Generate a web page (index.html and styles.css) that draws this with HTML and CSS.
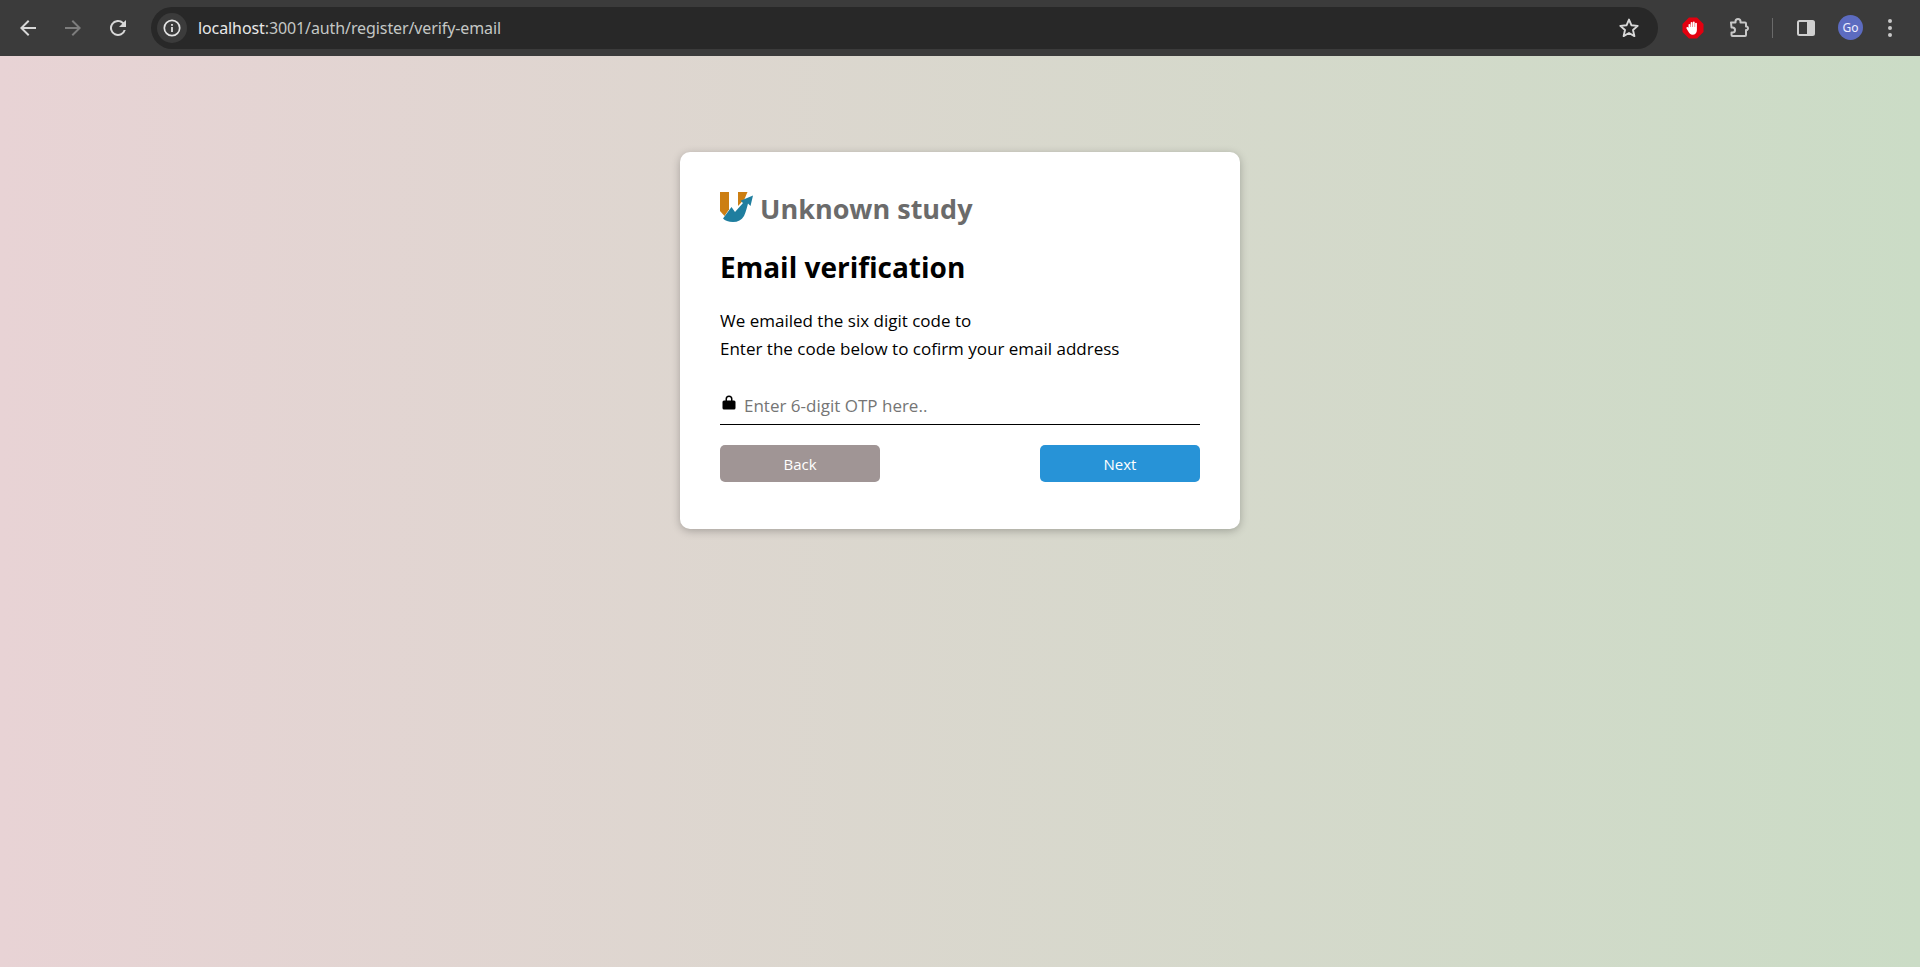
FILE: index.html
```html
<!DOCTYPE html>
<html lang="en">
<head>
    <meta charset="UTF-8">
    <meta name="viewport" content="width=device-width, initial-scale=1.0">
    <title>Email verification</title>
    <link rel="stylesheet" href="styles.css">
</head>
<body>

    <header class="toolbar">
        <div class="nav-icons">
            <svg class="icon" viewBox="0 0 24 24"><path d="M20 11H7.8l5.6-5.6L12 4l-8 8 8 8 1.4-1.4L7.8 13H20z"/></svg>
            <svg class="icon icon-dim" viewBox="0 0 24 24"><path d="M4 11h12.2l-5.6-5.6L12 4l8 8-8 8-1.4-1.4 5.6-5.6H4z"/></svg>
            <svg class="icon" viewBox="0 0 24 24"><path d="M17.65 6.35A8 8 0 1 0 19.73 14h-2.08A6 6 0 1 1 12 6c1.66 0 3.14.69 4.22 1.78L13 11h7V4z"/></svg>
        </div>
        <div class="omnibox">
            <span class="site-info">
                <svg viewBox="0 0 20 20" width="20" height="20"><circle cx="10" cy="10" r="7.7" fill="none" stroke="#e3e3e3" stroke-width="1.7"/><rect x="9.1" y="9" width="1.8" height="5" fill="#e3e3e3"/><rect x="9.1" y="6" width="1.8" height="1.8" fill="#e3e3e3"/></svg>
            </span>
            <span class="url">localhost<span class="url-path">:3001/auth/register/verify-email</span></span>
            <svg class="star" viewBox="0 0 24 24"><path d="M12 3.6l2.5 5.7 6.2.6-4.7 4.1 1.4 6.1L12 17.000l-5.400 3.100 1.400-6.100-4.700-4.100 6.200-.6z" fill="none" stroke="#d8d8d8" stroke-width="1.9" stroke-linejoin="round"/></svg>
        </div>
        <div class="ext-icons">
            <svg class="ext-stop" viewBox="0 0 22 22"><path d="M7 .5h8L21.500 7v8L15 21.500H7L.5 15V7z" fill="#e3000f"/><path d="M6.500 10.500V7.500a1 1 0 0 1 1.800 0V10h.4V5.500a1 1 0 0 1 1.800 0V10h.4V5a1 1 0 0 1 1.800 0v5h.4V6.200a1 1 0 0 1 1.800 0V13c0 3-1.800 4.700-4.300 4.700-2.200 0-3.300-1.200-4.300-3.200L4.500 11.500c-.5-1.200.9-2 1.600-1z" fill="#fff"/></svg>
            <svg class="ext-puzzle" viewBox="0 0 24 24"><path d="M4 6.500h4.500V5.500a2.500 2.500 0 0 1 5 0v1H18a1 1 0 0 1 1 1V10.500h1a2 2 0 0 1 0 3.500h-1V19a1 1 0 0 1-1 1H5.500a1 1 0 0 1-1-1V16.500h1a2.500 2.500 0 0 0 0-5h-1z" fill="none" stroke="#c8c8c8" stroke-width="2" stroke-linejoin="round"/></svg>
            <span class="divider"></span>
            <svg class="ext-side" viewBox="0 0 20 20"><rect x="2" y="3" width="16" height="14" rx="1.500" fill="none" stroke="#d0d0d0" stroke-width="2"/><rect x="11" y="3" width="7" height="14" fill="#d0d0d0"/></svg>
            <span class="avatar">Go</span>
            <span class="kebab"><i></i><i></i><i></i></span>
        </div>
    </header>

    <main class="page">
        <div class="card">
            <div class="brand">
                <svg class="brand-logo" viewBox="0 0 34 32">
                    <path d="M0 0h9v17.500L4.500 24 0 19z" fill="#cc7e12"/>
                    <path d="M18 0h9.500l-3 7-6.500 7z" fill="#cc7e12"/>
                    <path d="M3 26.500L11.500 15l3.500 5 8-9-2.500-2.300L33 3.500 30.500 14 28 11.500c-1 4-2 8-4 12.500-2.500 4-6 6-11 6-4.500 0-8-1.500-10-3.500z" fill="#1f7e9f"/>
                </svg>
                <span class="brand-name">Unknown study</span>
            </div>
            <h1>Email verification</h1>
            <p class="intro">We emailed the six digit code to<br>Enter the code below to cofirm your email address</p>
            <div class="otp-field">
                <svg class="lock" viewBox="0 0 16 16"><path d="M4.500 7V5a3.500 3.500 0 0 1 7 0v2h-1.500V5a2 2 0 0 0-4 0v2z"/><rect x="1.500" y="6.500" width="13" height="9" rx="1.500"/></svg>
                <input type="text" placeholder="Enter 6-digit OTP here..">
            </div>
            <div class="actions">
                <button class="btn btn-back">Back</button>
                <button class="btn btn-next">Next</button>
            </div>
        </div>
    </main>

</body>
</html>
```
FILE: styles.css
```css
* {
    box-sizing: border-box;
}
html, body {
    height: 100%;
}
body {
    margin: 0;
    display: flex;
    flex-direction: column;
    overflow: hidden;
    font-family: "Open Sans", "Noto Sans", sans-serif;
    background: #fff;
}
.toolbar {
    height: 56px;
    flex: none;
    display: flex;
    align-items: center;
    background: #3b3b3b;
    padding: 0 8px 1px 16px;
}
.nav-icons {
    display: flex;
    gap: 21px;
    width: 135px;
    flex: none;
}
.icon {
    width: 24px;
    height: 24px;
    fill: #d8d8d8;
}
.icon-dim {
    fill: #7d7d7d;
}
.omnibox {
    width: 1507px;
    flex: none;
    height: 42px;
    border-radius: 21px;
    background: #282828;
    display: flex;
    align-items: center;
    padding: 0 17px 0 6px;
}
.site-info {
    width: 30px;
    height: 30px;
    border-radius: 50%;
    background: #3b3b3b;
    display: flex;
    align-items: center;
    justify-content: center;
}
.url {
    margin-left: 11px;
    font-family: "Noto Sans", sans-serif;
    font-size: 16px;
    letter-spacing: -0.1px;
    color: #e8e8e8;
    flex: 1;
}
.url-path {
    color: #c4c7c5;
}
.star {
    width: 24px;
    height: 24px;
}
.ext-icons {
    display: flex;
    align-items: center;
    flex: 1;
    padding-left: 24px;
}
.ext-stop {
    width: 22px;
    height: 22px;
}
.ext-puzzle {
    width: 24px;
    height: 24px;
    margin-left: 23px;
}
.divider {
    width: 1px;
    height: 20px;
    background: #6a6a6a;
    margin-left: 21px;
}
.ext-side {
    width: 20px;
    height: 20px;
    margin-left: 23px;
}
.avatar {
    width: 25px;
    height: 25px;
    margin-left: 22px;
    border-radius: 50%;
    background: #5c6bc0;
    color: #eef;
    font-family: "Noto Sans", sans-serif;
    font-size: 12px;
    display: flex;
    align-items: center;
    justify-content: center;
}
.kebab {
    margin-left: 25px;
    display: flex;
    flex-direction: column;
    gap: 3px;
}
.kebab i {
    width: 4px;
    height: 4px;
    border-radius: 50%;
    background: #c8c8c8;
}
.page {
    flex: 1;
    display: flex;
    justify-content: center;
    align-items: flex-start;
    padding-top: 96px;
    background: linear-gradient(90deg, #e8d3d5, #cbdcc6);
}
.card {
    width: 560px;
    height: 377px;
    background: #fff;
    border-radius: 10px;
    padding: 40px;
    box-shadow: 0 2px 8px rgba(0, 0, 0, 0.25);
}
.brand {
    display: flex;
    align-items: center;
    gap: 6px;
    height: 32px;
}
.brand-logo {
    width: 34px;
    height: 32px;
}
.brand-name {
    font-size: 27px;
    font-weight: 700;
    color: #6b6b6b;
}
h1 {
    margin: 23px 0 0;
    font-size: 28px;
    line-height: 40px;
    font-weight: 700;
    color: #000;
}
.intro {
    margin: 20px 0 0;
    font-size: 17px;
    line-height: 28px;
    color: #000;
}
.otp-field {
    margin-top: 23px;
    height: 39px;
    display: flex;
    align-items: center;
    border-bottom: 1px solid #000;
}
.lock {
    width: 16px;
    height: 16px;
    margin: 0 6px 6px 0;
    margin-left: 1px;
    flex: none;
}
.otp-field input {
    flex: 1;
    border: none;
    outline: none;
    padding: 0 0 0 1px;
    font-family: inherit;
    font-size: 17px;
    color: #000;
    background: transparent;
}
.otp-field input::placeholder {
    color: #757575;
}
.actions {
    margin-top: 20px;
    display: flex;
    justify-content: space-between;
}
.btn {
    width: 160px;
    height: 37px;
    border: none;
    border-radius: 5px;
    color: #fff;
    font-family: inherit;
    font-size: 15px;
}
.btn-back {
    background: #a09595;
}
.btn-next {
    background: #2793d7;
}
```
